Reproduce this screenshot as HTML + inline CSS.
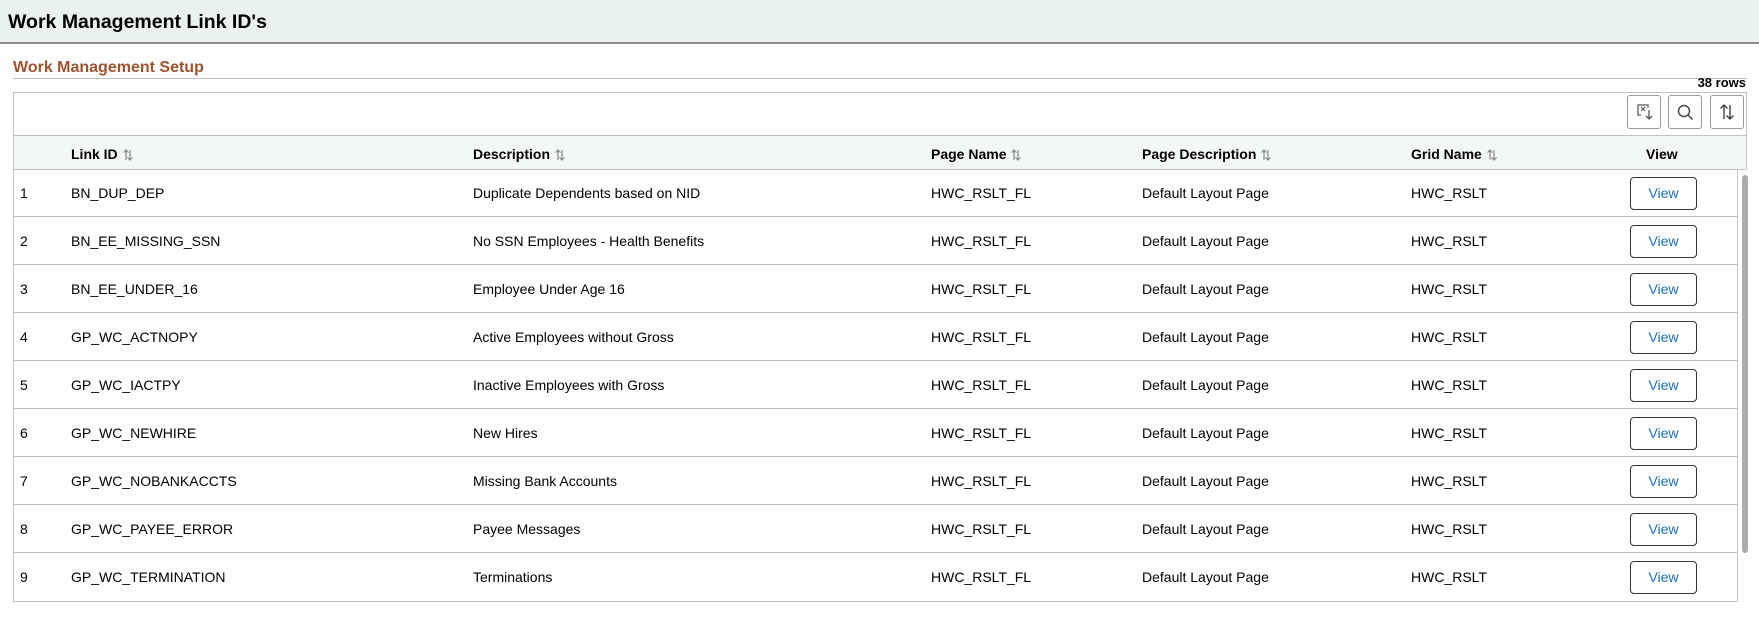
<!DOCTYPE html>
<html><head><meta charset="utf-8"><style>
*{box-sizing:border-box;margin:0;padding:0}
body{width:1759px;height:617px;background:#fff;font-family:"Liberation Sans",Arial,sans-serif;color:#000;position:relative;overflow:hidden}
.hdr{position:absolute;left:0;top:0;width:1759px;height:44px;background:#e9f1f1;border-bottom:2px solid #8a8a8a}
.hdr h1{position:absolute;left:8px;top:11px;font-size:19.5px;font-weight:bold;color:#000}
.sec{position:absolute;left:13px;top:59px;font-size:16px;font-weight:bold;color:#a0532d}
.secline{position:absolute;left:13px;top:78px;width:1734px;height:1px;background:#c0c0c0}
.rows{position:absolute;right:13px;top:75px;font-size:13px;font-weight:bold}
.grid{position:absolute;left:13px;top:92px;width:1734px;height:77px;border:1px solid #c3c3c3;border-bottom:none}
.tb{position:absolute;top:95px;width:34px;height:34px;border:1px solid #9a9a9a;border-radius:3px;background:#fff}
.thead{position:absolute;left:13px;top:135px;width:1734px;height:35px;background:#f4f7f8;border-top:1px solid #c3c3c3;border-bottom:1px solid #c3c3c3;border-left:1px solid #c3c3c3;border-right:1px solid #c3c3c3}
.th{position:absolute;top:10px;font-size:14px;font-weight:bold;white-space:nowrap}
.th svg{vertical-align:-2px;margin-left:4px}
.body{position:absolute;left:13px;top:169px;width:1725px;height:433px;border-left:1px solid #c3c3c3;border-right:1px solid #c3c3c3;border-bottom:1px solid #c3c3c3}
.row{position:absolute;left:0;width:1723px;height:48px;border-bottom:1px solid #c3c3c3;font-size:14px}
.row span{position:absolute;top:16px;white-space:nowrap}
.btn{position:absolute;left:1616px;top:8px;width:67px;height:33px;border:1px solid #333;border-radius:4px;color:#1a6fbf;font-size:14px;text-align:center;line-height:31px}
.sb{position:absolute;left:1742px;top:175px;width:6px;height:378px;background:#ababab;border-radius:3px}
</style></head><body>
<div class="hdr"><h1>Work Management Link ID's</h1></div>
<div class="sec">Work Management Setup</div>
<div class="secline"></div>
<div class="rows">38 rows</div>
<div class="grid"></div>
<div class="tb" style="left:1627px"><svg width="32" height="32" viewBox="0 0 32 32"><path d="M13 19H10V9h10v3" fill="none" stroke="#555" stroke-width="1.2"/><path d="M13 11l4 4M17 11l-4 4" stroke="#555" stroke-width="1.1"/><path d="M21 14v9M18 20l3 3 3-3" fill="none" stroke="#555" stroke-width="1.3"/></svg></div>
<div class="tb" style="left:1668px"><svg width="32" height="32" viewBox="0 0 32 32"><circle cx="15" cy="15" r="5.5" fill="none" stroke="#444" stroke-width="1.4"/><path d="M19 19l4.5 4.5" stroke="#444" stroke-width="1.5"/></svg></div>
<div class="tb" style="left:1710px"><svg width="32" height="32" viewBox="0 0 32 32"><path d="M13 23V9M9.5 12.5L13 9l3.5 3.5M19 9v14M15.5 19.5L19 23l3.5-3.5" fill="none" stroke="#444" stroke-width="1.4"/></svg></div>
<div class="thead">
<div class="th" style="left:57px">Link ID<svg width="12" height="12" viewBox="0 0 12 12"><path d="M4 11V1M1.5 3.5L4 1l2.5 2.5M8 1v10M5.5 8.5L8 11l2.5-2.5" fill="none" stroke="#888" stroke-width="1.2"/></svg></div>
<div class="th" style="left:459px">Description<svg width="12" height="12" viewBox="0 0 12 12"><path d="M4 11V1M1.5 3.5L4 1l2.5 2.5M8 1v10M5.5 8.5L8 11l2.5-2.5" fill="none" stroke="#888" stroke-width="1.2"/></svg></div>
<div class="th" style="left:917px">Page Name<svg width="12" height="12" viewBox="0 0 12 12"><path d="M4 11V1M1.5 3.5L4 1l2.5 2.5M8 1v10M5.5 8.5L8 11l2.5-2.5" fill="none" stroke="#888" stroke-width="1.2"/></svg></div>
<div class="th" style="left:1128px">Page Description<svg width="12" height="12" viewBox="0 0 12 12"><path d="M4 11V1M1.5 3.5L4 1l2.5 2.5M8 1v10M5.5 8.5L8 11l2.5-2.5" fill="none" stroke="#888" stroke-width="1.2"/></svg></div>
<div class="th" style="left:1397px">Grid Name<svg width="12" height="12" viewBox="0 0 12 12"><path d="M4 11V1M1.5 3.5L4 1l2.5 2.5M8 1v10M5.5 8.5L8 11l2.5-2.5" fill="none" stroke="#888" stroke-width="1.2"/></svg></div>
<div class="th" style="left:1632px">View</div>
</div>
<div class="body">
<div class="row" style="top:0"><span style="left:6px">1</span><span style="left:57px">BN_DUP_DEP</span><span style="left:459px">Duplicate Dependents based on NID</span><span style="left:917px">HWC_RSLT_FL</span><span style="left:1128px">Default Layout Page</span><span style="left:1397px">HWC_RSLT</span><div class="btn">View</div></div>
<div class="row" style="top:48px"><span style="left:6px">2</span><span style="left:57px">BN_EE_MISSING_SSN</span><span style="left:459px">No SSN Employees - Health Benefits</span><span style="left:917px">HWC_RSLT_FL</span><span style="left:1128px">Default Layout Page</span><span style="left:1397px">HWC_RSLT</span><div class="btn">View</div></div>
<div class="row" style="top:96px"><span style="left:6px">3</span><span style="left:57px">BN_EE_UNDER_16</span><span style="left:459px">Employee Under Age 16</span><span style="left:917px">HWC_RSLT_FL</span><span style="left:1128px">Default Layout Page</span><span style="left:1397px">HWC_RSLT</span><div class="btn">View</div></div>
<div class="row" style="top:144px"><span style="left:6px">4</span><span style="left:57px">GP_WC_ACTNOPY</span><span style="left:459px">Active Employees without Gross</span><span style="left:917px">HWC_RSLT_FL</span><span style="left:1128px">Default Layout Page</span><span style="left:1397px">HWC_RSLT</span><div class="btn">View</div></div>
<div class="row" style="top:192px"><span style="left:6px">5</span><span style="left:57px">GP_WC_IACTPY</span><span style="left:459px">Inactive Employees with Gross</span><span style="left:917px">HWC_RSLT_FL</span><span style="left:1128px">Default Layout Page</span><span style="left:1397px">HWC_RSLT</span><div class="btn">View</div></div>
<div class="row" style="top:240px"><span style="left:6px">6</span><span style="left:57px">GP_WC_NEWHIRE</span><span style="left:459px">New Hires</span><span style="left:917px">HWC_RSLT_FL</span><span style="left:1128px">Default Layout Page</span><span style="left:1397px">HWC_RSLT</span><div class="btn">View</div></div>
<div class="row" style="top:288px"><span style="left:6px">7</span><span style="left:57px">GP_WC_NOBANKACCTS</span><span style="left:459px">Missing Bank Accounts</span><span style="left:917px">HWC_RSLT_FL</span><span style="left:1128px">Default Layout Page</span><span style="left:1397px">HWC_RSLT</span><div class="btn">View</div></div>
<div class="row" style="top:336px"><span style="left:6px">8</span><span style="left:57px">GP_WC_PAYEE_ERROR</span><span style="left:459px">Payee Messages</span><span style="left:917px">HWC_RSLT_FL</span><span style="left:1128px">Default Layout Page</span><span style="left:1397px">HWC_RSLT</span><div class="btn">View</div></div>
<div class="row" style="top:384px;border-bottom:none"><span style="left:6px">9</span><span style="left:57px">GP_WC_TERMINATION</span><span style="left:459px">Terminations</span><span style="left:917px">HWC_RSLT_FL</span><span style="left:1128px">Default Layout Page</span><span style="left:1397px">HWC_RSLT</span><div class="btn">View</div></div>
</div>
<div class="sb"></div>
</body></html>
